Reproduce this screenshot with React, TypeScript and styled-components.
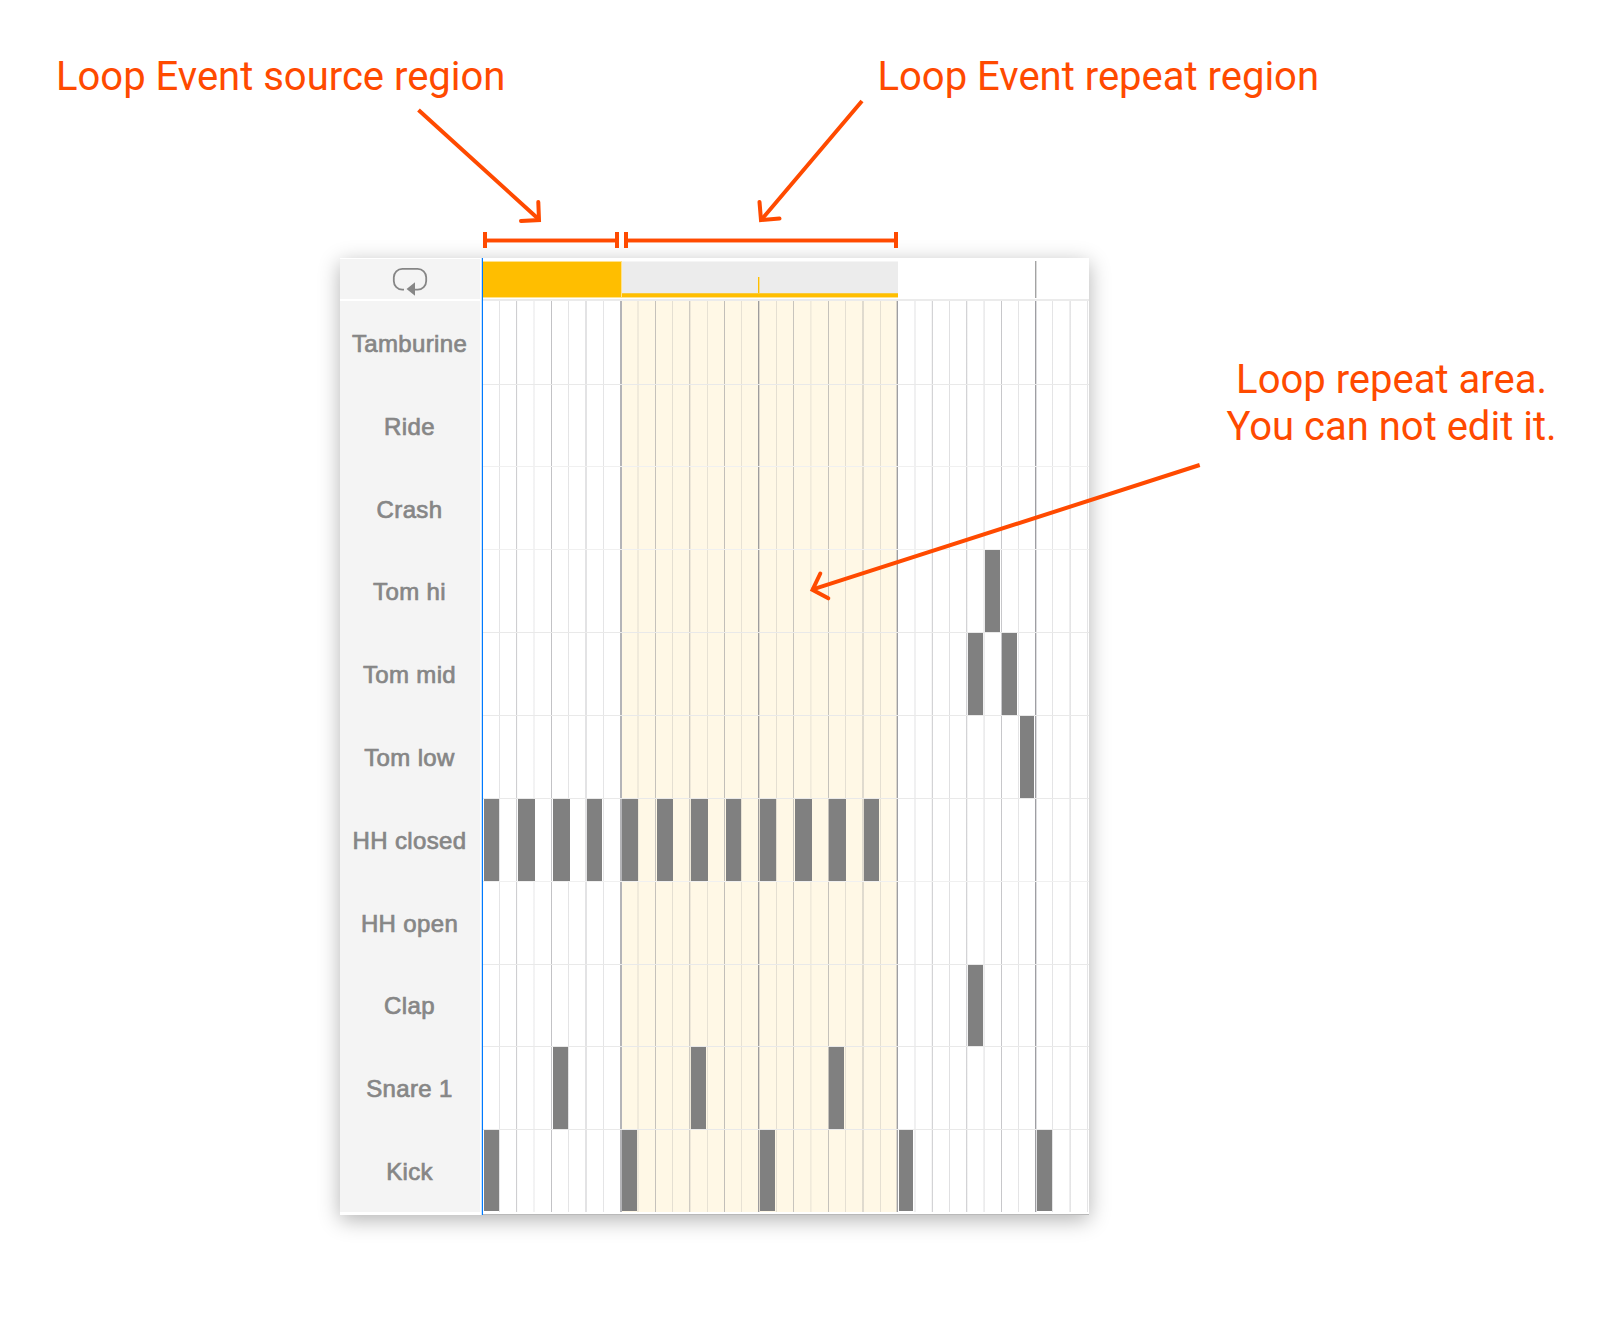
import React from "react";
import styled, { createGlobalStyle } from "styled-components";

const ACCENT = "#ff4a00";
const GOLD = "#ffbe00";
const LABEL_BG = "#f4f4f4";
const INK = "#868686";

const GlobalStyle = createGlobalStyle`
  body {
    margin: 0;
    background: #fff;
  }
`;

/* A sixteenth-note column: width, then the opacity of its first and second pixel. */
type Step = [number, number, number];

const STEPS: Step[] = [
  [16, 0, 0], [17, 0.22, 0], [17, 0.4, 0.04], [18, 0.1, 0.1],
  [17, 0.5, 0], [17, 0.22, 0], [18, 0.23, 0.23], [17, 0.22, 0],
  [17, 0.62, 0.62], [18, 0.12, 0.12], [17, 0.48, 0], [17, 0.22, 0],
  [18, 0.4, 0.14], [17, 0.2, 0], [17, 0.5, 0], [17, 0.2, 0],
  [18, 0.8, 0.28], [17, 0.22, 0], [17, 0.46, 0], [18, 0.12, 0.08],
  [17, 0.48, 0], [17, 0.22, 0], [18, 0.26, 0.26], [16, 0.22, 0],
  [18, 0.3, 0.8], [17, 0.12, 0.12], [18, 0.08, 0.36], [17, 0.26, 0],
  [17, 0.36, 0.1], [18, 0.12, 0.16], [17, 0.46, 0], [17, 0.22, 0],
  [17, 0.8, 0.28], [17, 0.22, 0], [18, 0.14, 0.22], [2, 0.22, 0],
];

const COLUMNS = STEPS.map((s) => `${s[0]}px`).join(" ");

/* A hit: step index, distance from the step's line, width. */
type Hit = [number, number, number];

interface Track {
  name: string;
  height: number;
  softLine?: boolean;
  hits: Hit[];
}

const TRACKS: Track[] = [
  { name: "Tamburine", height: 84, hits: [] },
  { name: "Ride", height: 82, softLine: true, hits: [] },
  { name: "Crash", height: 83, softLine: true, hits: [] },
  { name: "Tom hi", height: 83, hits: [[29, 2, 15]] },
  { name: "Tom mid", height: 83, hits: [[28, 2, 15], [30, 1, 15]] },
  { name: "Tom low", height: 83, hits: [[31, 2, 14]] },
  {
    name: "HH closed",
    height: 83,
    softLine: true,
    hits: [
      [0, 1, 15], [2, 2, 17], [4, 2, 17], [6, 2, 15],
      [8, 2, 16], [10, 2, 16], [12, 2, 17], [14, 2, 15],
      [16, 2, 16], [18, 2, 17], [20, 1, 17], [22, 2, 15],
    ],
  },
  { name: "HH open", height: 83, hits: [] },
  { name: "Clap", height: 82, hits: [[28, 2, 15]] },
  { name: "Snare 1", height: 83, hits: [[4, 2, 15], [12, 2, 15], [20, 1, 15]] },
  {
    name: "Kick",
    height: 82,
    hits: [[0, 1, 15], [8, 2, 15], [16, 2, 15], [24, 3, 14], [32, 2, 15]],
  },
];

const Page = styled.main`
  position: relative;
  box-sizing: border-box;
  width: 1597px;
  height: 1327px;
  padding: 232px 0 0 340px;
  overflow: hidden;
  background: #fff;
`;

const Brackets = styled.div`
  position: relative;
  z-index: 1;
  display: flex;
  gap: 5px;
  height: 16px;
  margin: 0 0 10px 143px;
`;

const Bracket = styled.div<{ $width: number }>`
  display: flex;
  align-items: center;
  box-sizing: border-box;
  width: ${(p) => p.$width}px;
  border: solid ${ACCENT};
  border-width: 0 4px;

  &::before {
    content: "";
    flex: 1;
    height: 3px;
    margin-top: 1px;
    background: ${ACCENT};
    box-shadow: 0 -1px rgba(255, 74, 0, 0.45), 0 1px rgba(255, 74, 0, 0.45);
  }
`;

const Sequencer = styled.section`
  display: flex;
  width: 749px;
  height: 957px;
  background: #fff;
  box-shadow: 0 5px 20px rgba(0, 0, 0, 0.3);
`;

const Names = styled.div`
  display: flex;
  flex-direction: column;
  width: 140px;
`;

const LoopCell = styled.div`
  display: flex;
  align-items: center;
  justify-content: center;
  box-sizing: border-box;
  height: 40px;
  margin: 1px 0 2px;
  padding-top: 5px;
  background: ${LABEL_BG};
`;

const NameList = styled.div`
  display: flex;
  flex-direction: column;
  height: 911px;
  background: ${LABEL_BG};
`;

const Name = styled.div`
  display: flex;
  flex: 1;
  align-items: center;
  justify-content: center;
  box-sizing: border-box;
  padding: 3px 1px 0 0;
  color: ${INK};
  font: 24px/28px "Liberation Sans", Arial, sans-serif;
  letter-spacing: 0.35px;
  -webkit-text-stroke: 0.7px ${INK};
  white-space: nowrap;
`;

const Playhead = styled.div`
  width: 1px;
  margin-left: 2px;
  background: #007aff;
  box-shadow: -1px 0 #c9e2fc;
`;

const Timeline = styled.div`
  display: flex;
  flex-direction: column;
  width: 606px;
`;

const Ruler = styled.div`
  display: flex;
  height: 36px;
  padding: 3px 0 2px;
  border-bottom: 2px solid #ebebeb;
`;

const LoopSource = styled.div`
  box-sizing: border-box;
  width: 139px;
  height: 37px;
  border: solid rgba(255, 190, 0, 0.45);
  border-width: 1px 1px 1px 0;
  background: ${GOLD} padding-box;
`;

const LoopRepeat = styled.div`
  display: flex;
  flex-direction: column;
  justify-content: flex-end;
  box-sizing: border-box;
  width: 276px;
  height: 37px;
  border: solid;
  border-width: 1px 0;
  border-color: #f5f5f5 transparent rgba(255, 190, 0, 0.45);
  background: #ececec padding-box;
`;

const RepeatTick = styled.div`
  width: 1px;
  height: 16px;
  margin-left: 136px;
  background: ${GOLD};
  box-shadow: 1px 0 #f7dc8c;
`;

const RepeatBar = styled.div`
  height: 4px;
  background: linear-gradient(#f8cb3a 1px, ${GOLD} 1px);
`;

const BarTick = styled.div`
  width: 1px;
  height: 37px;
  margin-left: 137px;
  background: #a3a3a3;
  box-shadow: 1px 0 #dadada;
`;

const Roll = styled.div`
  position: relative;
  height: 911px;
  background: linear-gradient(#fff8e6, #fff8e6) 139px 0 / 275px 100% no-repeat;
`;

const StepLines = styled.div`
  position: absolute;
  inset: 0;
  display: grid;
  grid-template-columns: ${COLUMNS};
`;

const StepLine = styled.div<{ $first: number; $second: number }>`
  background: linear-gradient(
    to right,
    rgba(134, 134, 140, ${(p) => p.$first}) 0 1px,
    rgba(134, 134, 140, ${(p) => p.$second}) 1px 2px,
    transparent 2px
  );
`;

const Lane = styled.div<{ $height: number; $soft: boolean; $last: boolean }>`
  position: relative;
  display: grid;
  grid-template-columns: ${COLUMNS};
  box-sizing: border-box;
  height: ${(p) => p.$height}px;
  border-bottom: ${(p) =>
    p.$last ? "1px solid transparent" : p.$soft ? "1px solid #f0f0f0" : "1px solid #e9e9e9"};
`;

const Note = styled.div<{ $step: number; $offset: number; $width: number }>`
  grid-row: 1;
  grid-column: ${(p) => p.$step + 1};
  width: ${(p) => p.$width}px;
  margin-left: ${(p) => p.$offset}px;
  background: #808080;
`;

const BottomEdge = styled.div`
  height: 1px;
  margin-top: 2px;
  background: #b9b9b9;
`;

const Callout = styled.p<{ $left: number; $top: number; $centered?: boolean }>`
  position: absolute;
  left: ${(p) => p.$left}px;
  top: ${(p) => p.$top}px;
  margin: 0;
  color: ${ACCENT};
  font: 400 40px/47px Roboto, sans-serif;
  text-align: ${(p) => (p.$centered ? "center" : "left")};
  white-space: nowrap;
`;

const Arrows = styled.svg`
  position: absolute;
  inset: 0;
  pointer-events: none;
`;

const LoopIcon = () => (
  <svg width="36" height="30" viewBox="0 0 36 30" fill="none">
    <path
      d="M12 22.6H10.3A8.6 8.6 0 0 1 1.8 14V10.3A8.6 8.6 0 0 1 10.3 1.8H25.7A8.6 8.6 0 0 1 34.2 10.3V14A8.6 8.6 0 0 1 25.7 22.6H22"
      stroke="#868686"
      strokeWidth="1.8"
    />
    <path d="M14.6 22L23 15.2V28.8Z" fill="#868686" />
  </svg>
);

export default function App() {
  return (
    <>
      <GlobalStyle />
      <Page>
        <Brackets>
          <Bracket $width={136} />
          <Bracket $width={274} />
        </Brackets>
        <Sequencer>
          <Names>
            <LoopCell>
              <LoopIcon />
            </LoopCell>
            <NameList>
              {TRACKS.map((t) => (
                <Name key={t.name}>{t.name}</Name>
              ))}
            </NameList>
          </Names>
          <Playhead />
          <Timeline>
            <Ruler>
              <LoopSource />
              <LoopRepeat>
                <RepeatTick />
                <RepeatBar />
              </LoopRepeat>
              <BarTick />
            </Ruler>
            <Roll>
              <StepLines>
                {STEPS.map((s, i) => (
                  <StepLine key={i} $first={s[1]} $second={s[2]} />
                ))}
              </StepLines>
              {TRACKS.map((t, i) => (
                <Lane
                  key={t.name}
                  $height={t.height}
                  $soft={Boolean(t.softLine)}
                  $last={i === TRACKS.length - 1}
                >
                  {t.hits.map(([step, offset, width]) => (
                    <Note key={step} $step={step} $offset={offset} $width={width} />
                  ))}
                </Lane>
              ))}
            </Roll>
            <BottomEdge />
          </Timeline>
        </Sequencer>

        <Callout $left={56} $top={53}>
          Loop Event source region
        </Callout>
        <Callout $left={877.5} $top={53}>
          Loop Event repeat region
        </Callout>
        <Callout $left={1226.5} $top={356} $centered>
          Loop repeat area.
          <br />
          You can not edit it.
        </Callout>

        <Arrows width="1597" height="1327" fill="none" stroke={ACCENT} strokeWidth="4">
          <path d="M418.5 110L539 219.5M862 101L762 219M1199.7 465L812 589.7" />
          <g strokeLinecap="round">
            <path d="M538.3 202L539 220L521 221" />
            <path d="M759.5 202L761 220L779.5 218.6" />
            <path d="M820.3 573.5L812.5 589.8L828.3 598.3" />
          </g>
        </Arrows>
      </Page>
    </>
  );
}
